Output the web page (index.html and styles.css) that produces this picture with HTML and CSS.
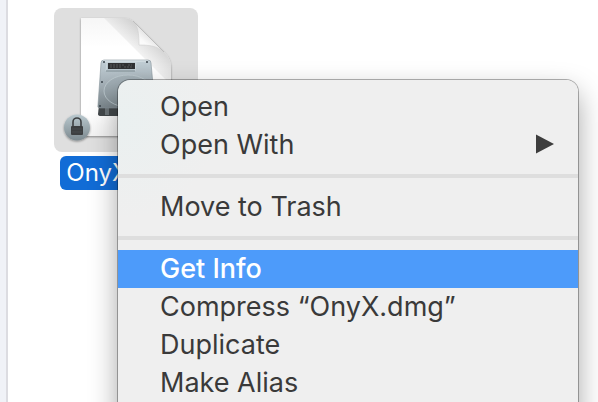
FILE: index.html
```html
<!DOCTYPE html>
<html lang="en">
<head>
    <meta charset="UTF-8">
    <meta name="viewport" content="width=device-width, initial-scale=1.0">
    <title>Finder</title>
    <link rel="stylesheet" href="styles.css">
</head>
<body>
    <div class="window">
        <aside class="sidebar"></aside>
        <main class="files">
            <div class="file">
                <div class="file-icon">
                    <svg width="144" height="144" viewBox="0 0 144 144" aria-hidden="true">
                        <defs>
                            <linearGradient id="paper" x1="0" y1="0" x2="0" y2="1">
                                <stop offset="0" stop-color="#f6f6f6"/>
                                <stop offset="0.25" stop-color="#fff"/>
                                <stop offset="0.8" stop-color="#fff"/>
                                <stop offset="1" stop-color="#f2f2f2"/>
                            </linearGradient>
                            <linearGradient id="fold" x1="0" y1="1" x2="0.5" y2="0.4">
                                <stop offset="0" stop-color="#fff"/>
                                <stop offset="0.6" stop-color="#fafafa"/>
                                <stop offset="1" stop-color="#e2e2e2"/>
                            </linearGradient>
                            <linearGradient id="curl" x1="0" y1="1" x2="1" y2="0">
                                <stop offset="0.4" stop-color="#bbb" stop-opacity="0"/>
                                <stop offset="0.8" stop-color="#aaa" stop-opacity="0.7"/>
                            </linearGradient>
                            <linearGradient id="metal" x1="0" y1="0" x2="0" y2="1">
                                <stop offset="0" stop-color="#c3d0d7"/>
                                <stop offset="0.5" stop-color="#a4b0b7"/>
                                <stop offset="1" stop-color="#7b868c"/>
                            </linearGradient>
                            <linearGradient id="badge" x1="0" y1="0" x2="0" y2="1">
                                <stop offset="0" stop-color="#b9c8ce"/>
                                <stop offset="1" stop-color="#7d8a90"/>
                            </linearGradient>
                            <filter id="soft" x="-10%" y="-10%" width="120%" height="120%">
                                <feDropShadow dx="0" dy="1" stdDeviation="1" flood-color="#000" flood-opacity="0.4"/>
                            </filter>
                        </defs>
                        <!-- document -->
                        <path d="M27 10h42c6 0 9 2 13 6l28 28c5 5 7 10 7 17v67H27z" fill="url(#paper)" filter="url(#soft)"/>
                        <path d="M50 10h19c6 0 9 2 13 6l28 28c5 5 7 10 7 17v16z" fill="url(#curl)"/>
                        <path d="M80 14c4 5 5 11 5 23 11 0 18 1 25 7z" fill="url(#fold)" stroke="#cfcfcf" stroke-width="0.6"/>
                        <path d="M79 13l31 31" stroke="#bdbdbd" stroke-width="1"/>
                        <!-- hard disk -->
                        <path d="M45 97h55v11H47q-3 0-3-2z" fill="#43484b"/>
                        <path d="M51 99h4v8h-4z" fill="#6c7478"/>
                        <path d="M50 52h44q3 0 3 3l4 43q0 2-3 2H46q-3 0-2-3l3-42q0-3 3-3z" fill="url(#metal)" stroke="#87949b" stroke-width="0.6"/>
                        <path d="M49 53h45" stroke="#dfe7eb" stroke-width="1"/>
                        <ellipse cx="74" cy="83" rx="24" ry="16" fill="#919ea5" fill-opacity="0.3" stroke="#bfcbd1" stroke-width="0.8"/>
                        <path d="M53 54h29l-1 9H52z" fill="#b8c6cd" stroke="#d9e2e6" stroke-width="0.6"/>
                        <path d="M52 63h29" stroke="#75838a" stroke-width="1"/>
                        <path d="M54 55h27v6H54z" fill="#303234"/>
                        <path d="M56 57h14m4 0h4M56 59h11m3 0h8" stroke="#5f6365" stroke-width="0.8" stroke-dasharray="2 1"/>
                        <g fill="#38424a">
                            <circle cx="50" cy="54" r="1"/>
                            <circle cx="93" cy="54" r="1"/>
                            <circle cx="48" cy="74" r="1"/>
                            <circle cx="46" cy="98" r="1"/>
                        </g>
                        <!-- lock badge -->
                        <circle cx="23" cy="119.500" r="13" fill="url(#badge)" filter="url(#soft)"/>
                        <path d="M19 118v-4a4 4 0 0 1 8 0v4" fill="none" stroke="#3c3f41" stroke-width="1.600"/>
                        <rect x="17" y="118" width="12" height="9" rx="1" fill="#3c3f41"/>
                        <path d="M18 121h10m-10 3h10" stroke="#4a4e50" stroke-width="0.8"/>
                    </svg>
                </div>
                <span class="file-name">OnyX.dmg</span>
            </div>
        </main>
    </div>

    <div class="context-menu">
        <button type="button" class="menu-item">Open</button>
        <button type="button" class="menu-item">Open With
            <svg class="arrow" width="18" height="20" viewBox="0 0 18 20" aria-hidden="true">
                <path d="M0 0.500l18 9.500-18 9.500z" fill="#3d3d3d"/>
            </svg>
        </button>
        <hr class="separator">
        <button type="button" class="menu-item">Move to Trash</button>
        <hr class="separator">
        <button type="button" class="menu-item selected">Get Info</button>
        <button type="button" class="menu-item">Compress “OnyX.dmg”</button>
        <button type="button" class="menu-item">Duplicate</button>
        <button type="button" class="menu-item">Make Alias</button>
    </div>
</body>
</html>
```
FILE: styles.css
```css
:root {
    --text-color: #3a3a3a;
    --menu-bg: #efefef;
    --highlight: #4d9bfa;
    --label-blue: #116cd6;
}

* {
    margin: 0;
    padding: 0;
    box-sizing: border-box;
    font-family: Inter, "Liberation Sans", sans-serif;
}

body {
    background-color: white;
    color: var(--text-color);
    overflow: hidden;
}

.window {
    display: flex;
    min-height: 100vh;
}

.sidebar {
    width: 8px;
    background-color: #f0f2f7;
    border-right: 2px solid #dcdce1;
}

.files {
    flex: 1;
    padding: 8px 46px;
}

.file {
    display: flex;
    flex-direction: column;
    align-items: center;
    gap: 4px;
    width: 144px;
}

.file-icon {
    height: 144px;
    background-color: #dfdfdf;
    border-radius: 8px;
}

.file-name {
    padding: 0 6px;
    background-color: var(--label-blue);
    border-radius: 6px;
    color: white;
    font-size: 24px;
    line-height: 34px;
}

/* opens over the file list */
.context-menu {
    position: absolute;
    top: 80px;
    left: 118px;
    right: 20px;
    padding: 8px 0 16px;
    background: radial-gradient(circle at 0 40px, #eaf0f0, var(--menu-bg) 100px);
    border-radius: 12px 12px 0 0;
    box-shadow: 0 0 0 1px rgba(0, 0, 0, 0.3), 0 12px 28px rgba(0, 0, 0, 0.36);
}

.menu-item {
    display: flex;
    justify-content: space-between;
    align-items: center;
    width: 100%;
    height: 38px;
    padding: 0 24px 2px 42px;
    border: none;
    background: none;
    color: var(--text-color);
    font-size: 27px;
    text-align: left;
}

.menu-item.selected {
    background-color: var(--highlight);
    color: white;
    font-weight: 500;
}

.separator {
    height: 4px;
    margin: 10px 0;
    border: none;
    background-color: #dedede;
}
```
